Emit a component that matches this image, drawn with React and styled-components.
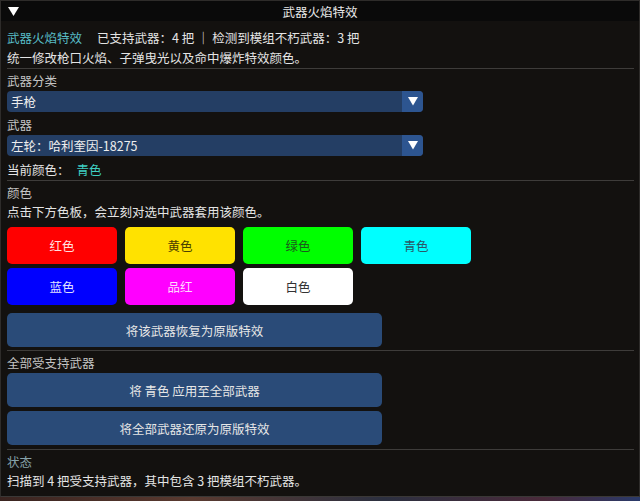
import React from 'react';
import styled, { createGlobalStyle } from 'styled-components';

const GlobalStyle = createGlobalStyle`
  html, body {
    margin: 0;
    padding: 0;
    background: #120f0d;
  }
  body {
    font-family: "Noto Sans CJK SC", "Noto Sans", sans-serif;
    font-size: 12.5px;
    color: #e4e4e4;
  }
`;

const Window = styled.div`
  width: 640px;
  height: 501px;
  display: flex;
  flex-direction: column;
  overflow: hidden;
  background: linear-gradient(90deg, #3a2420 0%, #5a3a30 30%, #2c3040 60%, #4a2a3a 85%, #2a3a6a 100%);
`;

const Panel = styled.div`
  height: 497px;
  box-sizing: border-box;
  display: flex;
  flex-direction: column;
  background: #13110f;
  border: 1px solid #2e2c2a;
  border-bottom-color: #3a3836;
`;

const TitleBar = styled.div`
  height: 20px;
  flex-shrink: 0;
  position: relative;
  display: flex;
  align-items: center;
  justify-content: center;
  background: #0a0a0a;
  color: #e8e8e8;
  font-size: 12.5px;
`;

const Collapse = styled.svg`
  position: absolute;
  left: 7px;
  top: 6px;
`;

const Body = styled.div`
  display: flex;
  flex-direction: column;
  padding: 9px 6px 0 6px;
`;

const Line = styled.div`
  height: 16px;
  line-height: 16px;
  white-space: nowrap;
  margin-top: ${({ $mt }) => $mt ?? 4}px;
  color: ${({ $dim }) => ($dim ? '#c4c4c4' : '#e4e4e4')};
`;

const Accent = styled.span`
  color: ${({ $bright }) => ($bright ? '#3fcfc2' : '#58bcc6')};
  margin-left: ${({ $lead }) => $lead ?? 0}px;
  margin-right: ${({ $gap }) => $gap ?? 0}px;
`;

const StatusLabel = styled(Line)`
  color: #86a2aa;
`;

const Separator = styled.div`
  height: 1px;
  width: 627px;
  background: #3e3c3a;
  margin-top: ${({ $mt }) => $mt ?? 2}px;
  margin-bottom: ${({ $mb }) => $mb ?? 4}px;
`;

const Combo = styled.div`
  width: 416px;
  height: 21px;
  margin-top: 2px;
  display: flex;
  border-radius: 4px;
  overflow: hidden;
  background: #243e64;
`;

const ComboValue = styled.div`
  flex: 1;
  padding-left: 4px;
  line-height: 21px;
  color: #eeeeee;
`;

const ComboArrow = styled.div`
  width: 21px;
  display: flex;
  align-items: center;
  justify-content: center;
  background: #2d5590;
`;

const SwatchGrid = styled.div`
  display: grid;
  grid-template-columns: repeat(4, 110px);
  column-gap: 8px;
  row-gap: 4px;
  margin-top: 7px;
`;

const Swatch = styled.button`
  height: 37px;
  border: none;
  border-radius: 5px;
  padding: 0;
  font-family: inherit;
  font-size: 12.5px;
  background: ${({ $bg }) => $bg};
  color: ${({ $fg }) => $fg};
`;

const ActionButton = styled.button`
  width: 375px;
  height: 34px;
  margin-top: ${({ $mt }) => $mt ?? 4}px;
  border: none;
  border-radius: 5px;
  padding: 0;
  font-family: inherit;
  font-size: 12.5px;
  color: #e6e6e6;
  background: #2a4b78;
`;

const swatches = [
  { name: '红色', bg: '#ff0000', fg: '#ffe0e0' },
  { name: '黄色', bg: '#ffe200', fg: '#4a4000' },
  { name: '绿色', bg: '#00ff00', fg: '#1c5a1c' },
  { name: '青色', bg: '#00ffff', fg: '#2a5866' },
  { name: '蓝色', bg: '#0000ff', fg: '#e0e0ff' },
  { name: '品红', bg: '#ff00ff', fg: '#ffd8ff' },
  { name: '白色', bg: '#ffffff', fg: '#333333' },
];

const Triangle = ({ size = 10 }) => (
  <svg width={size} height={size * 0.85} viewBox="0 0 10 8.5">
    <polygon points="0,0 10,0 5,8.5" fill="#ffffff" />
  </svg>
);

export default function App() {
  return (
    <>
      <GlobalStyle />
      <Window>
        <Panel>
          <TitleBar>
            <Collapse width="11" height="9" viewBox="0 0 11 9">
              <polygon points="0,0 11,0 5.5,9" fill="#ffffff" />
            </Collapse>
            武器火焰特效
          </TitleBar>

          <Body>
            <Line $mt={0}>
              <Accent $gap={15}>武器火焰特效</Accent>
              已支持武器：4 把 ｜ 检测到模组不朽武器：3 把
            </Line>
            <Line>统一修改枪口火焰、子弹曳光以及命中爆炸特效颜色。</Line>
            <Separator />

            <Line $mt={0} $dim>武器分类</Line>
            <Combo>
              <ComboValue>手枪</ComboValue>
              <ComboArrow><Triangle /></ComboArrow>
            </Combo>
            <Line $mt={5} $dim>武器</Line>
            <Combo>
              <ComboValue>左轮：哈利奎因-18275</ComboValue>
              <ComboArrow><Triangle /></ComboArrow>
            </Combo>
            <Line $mt={6}>
              当前颜色：
              <Accent $bright $lead={7}>青色</Accent>
            </Line>
            <Separator />

            <Line $mt={0} $dim>颜色</Line>
            <Line $mt={3}>点击下方色板，会立刻对选中武器套用该颜色。</Line>
            <SwatchGrid>
              {swatches.map(s => (
                <Swatch key={s.name} $bg={s.bg} $fg={s.fg}>{s.name}</Swatch>
              ))}
            </SwatchGrid>
            <ActionButton $mt={8}>将该武器恢复为原版特效</ActionButton>
            <Separator $mt={3} />

            <Line $mt={0} $dim>全部受支持武器</Line>
            <ActionButton $mt={2}>将 青色 应用至全部武器</ActionButton>
            <ActionButton>将全部武器还原为原版特效</ActionButton>
            <Separator $mt={4} />

            <StatusLabel $mt={0}>状态</StatusLabel>
            <Line $mt={3}>扫描到 4 把受支持武器，其中包含 3 把模组不朽武器。</Line>
          </Body>
        </Panel>
      </Window>
    </>
  );
}
